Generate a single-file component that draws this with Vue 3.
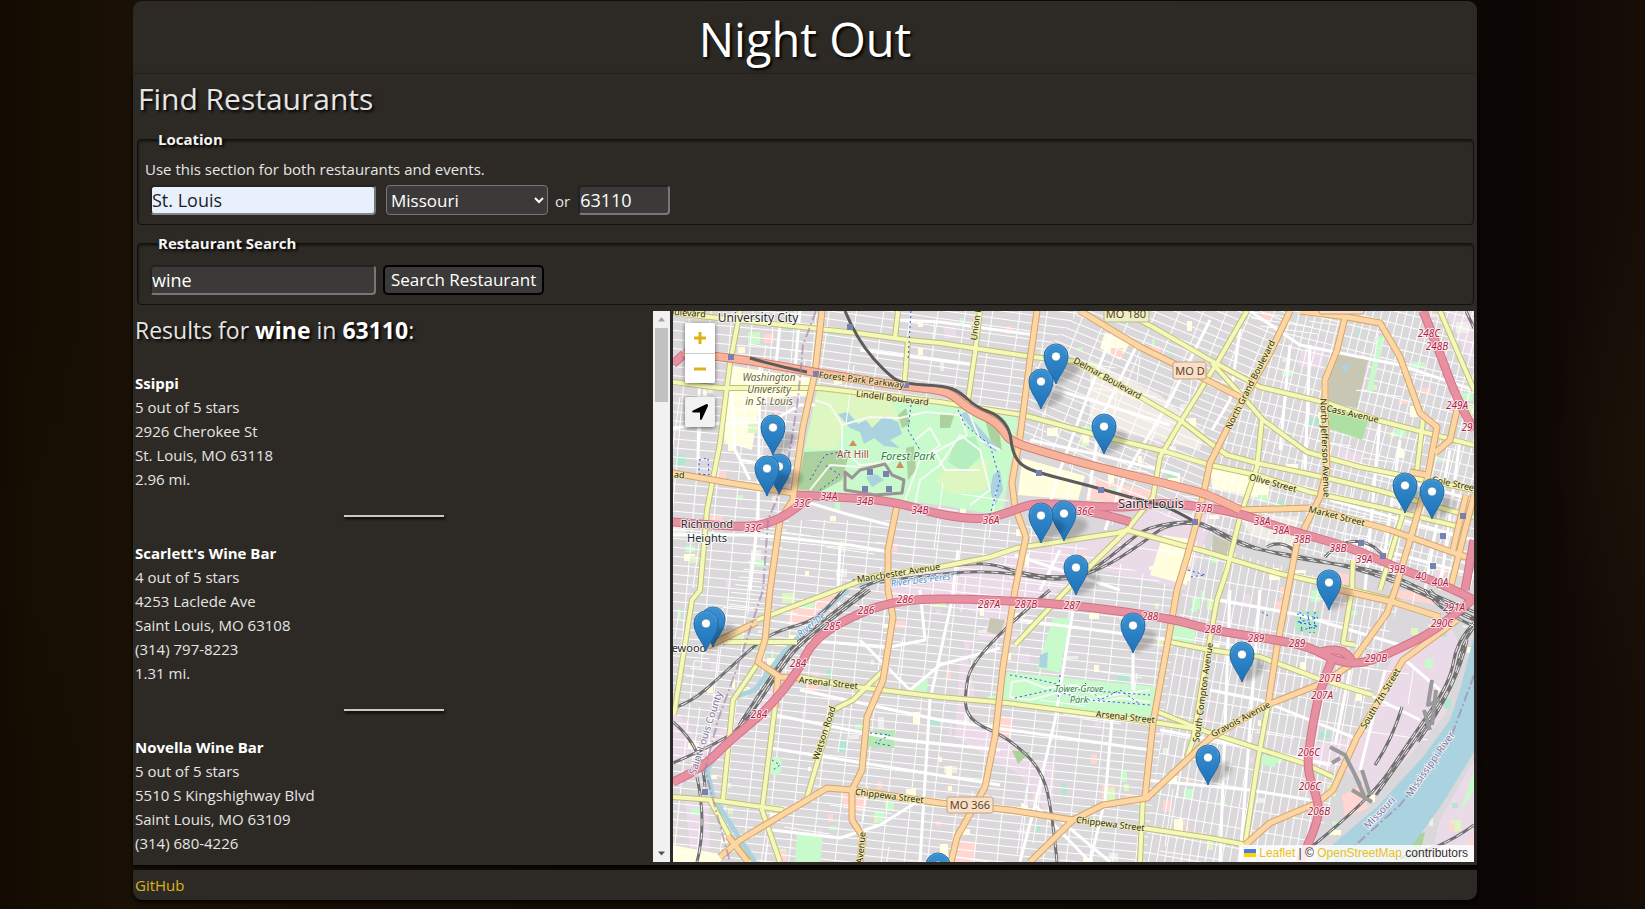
<script setup>
import { ref } from 'vue'

const city = ref('St. Louis')
const state = ref('Missouri')
const zip = ref('63110')
const term = ref('wine')

const results = [
  { name: 'Ssippi', lines: ['5 out of 5 stars', '2926 Cherokee St', 'St. Louis, MO 63118', '2.96 mi.'] },
  { name: "Scarlett's Wine Bar", lines: ['4 out of 5 stars', '4253 Laclede Ave', 'Saint Louis, MO 63108', '(314) 797-8223', '1.31 mi.'] },
  { name: 'Novella Wine Bar', lines: ['5 out of 5 stars', '5510 S Kingshighway Blvd', 'Saint Louis, MO 63109', '(314) 680-4226', '3.04 mi.'] },
]

const markers = [
  [1056, 384], [1041, 409], [773, 455], [1104, 454], [779, 494], [767, 496], [1405, 513], [1432, 519],
  [1064, 541], [1041, 543], [1076, 595], [1329, 610], [713, 647], [706, 651], [1133, 653], [1242, 682],
  [1208, 785], [938, 893],
]

// Rounds the corners of an "M x y L x y" polyline through its segment midpoints.
const smooth = (d) => {
  const n = d.match(/-?\d+/g).map(Number)
  const p = []
  for (let i = 0; i < n.length; i += 2) p.push([n[i], n[i + 1]])
  if (p.length < 3) return d
  let out = `M${p[0][0]} ${p[0][1]}`
  for (let i = 1; i < p.length - 1; i++) {
    const last = i === p.length - 2
    const ex = last ? p[i + 1][0] : (p[i][0] + p[i + 1][0]) / 2
    const ey = last ? p[i + 1][1] : (p[i][1] + p[i + 1][1]) / 2
    out += `Q${p[i][0]} ${p[i][1]} ${ex} ${ey}`
  }
  return out
}

// Seeded generator keeps the scattered city blocks stable between renders.
let seed = 41
const rand = () => {
  seed = (seed * 16807) % 2147483647
  return seed / 2147483647
}
const tones = ['#c8facc', '#c8facc', '#def6c0', '#ffffe0', '#ffffe0', '#ffd6d1', '#ebdbe8', '#eeeeea', '#b3e6cf']
const blocks = Array.from({ length: 330 }, () => ({
  x: Math.round(673 + rand() * 795),
  y: Math.round(311 + rand() * 548),
  w: Math.round(3 + rand() * 10),
  h: Math.round(3 + rand() * 9),
  fill: tones[Math.floor(rand() * tones.length)],
}))
const lanes = Array.from({ length: 90 }, () => {
  const x = Math.round(673 + rand() * 795)
  const y = Math.round(311 + rand() * 548)
  const long = Math.round(20 + rand() * 50)
  return rand() > 0.5
    ? `M${x} ${y}l${long} ${Math.round(long / 7)}`
    : `M${x} ${y}l${-Math.round(long / 7)} ${long}`
})

const districts = [
  { fill: '#ebdbe8', d: 'M870 575L940 566L1017 552L1120 535L1150 510L1215 515L1185 590L1100 570L1040 600L1000 640L963 640L975 690L965 725L1010 735L1025 760L1055 765L1052 820L1020 775L955 737L960 660L990 620L940 597L890 600Z' },
  { fill: '#ebdbe8', d: 'M673 705L700 745L760 700L790 650L800 640L770 700L720 750L673 765Z' },
  { fill: '#ebdbe8', d: 'M685 800L708 800L710 850L690 848Z' },
  { fill: '#ebdbe8', d: 'M1395 650L1450 625L1462 650L1445 715L1375 795L1345 770L1310 770L1315 745L1360 735Z' },
  { fill: '#ebdbe8', d: 'M1300 350L1325 348L1322 368L1298 366Z' },
  { fill: '#ebdbe8', d: 'M1340 448L1363 455L1360 470L1338 462Z' },
  { fill: '#ebdbe8', d: 'M1430 862L1440 820L1474 760L1474 862Z' },
  { fill: '#ebdbe8', d: 'M1445 311L1474 311L1474 370Z' },
  { fill: '#f0ebe4', d: 'M1090 360L1160 395L1205 432L1200 450L1090 425Z' },
  { fill: '#ffffe0', d: 'M728 365L770 372L812 378L808 395L760 400L752 450L724 442Z' },
  { fill: '#ffffe0', d: 'M1163 535L1195 540L1187 585L1150 575Z' },
  { fill: '#ffffe0', d: 'M1105 332L1130 343L1120 360L1100 348Z' },
  { fill: '#ffffe0', d: 'M1022 458L1085 476L1078 500L1018 495Z' },
  { fill: '#ffffe0', d: 'M1210 462L1270 476L1268 500L1212 488Z' },
  { fill: '#ffffe0', d: 'M673 845L725 855L720 862L673 862Z' },
  { fill: '#ffd6d1', d: 'M1093 478L1155 492L1150 508L1085 502Z' },
  { fill: '#ffd6d1', d: 'M790 610L832 592L850 592L820 620L788 624Z' },
  { fill: '#ffd6d1', d: 'M840 792L868 796L862 812L845 808Z' },
  { fill: '#ffd6d1', d: 'M960 840L977 842L972 862L955 862Z' },
  { fill: '#ffd6d1', d: 'M1342 795L1363 785L1368 808L1345 818Z' },
  { fill: '#ffd6d1', d: 'M1395 590L1430 592L1436 605L1398 598Z' },
  { fill: '#ffd6d1', d: 'M1328 570L1350 575L1346 600L1326 592Z' },
  { fill: '#ffd6d1', d: 'M1103 785L1115 785L1113 800L1101 798Z' },
  { fill: '#ffd6d1', d: 'M998 715L1013 718L1010 738L994 734Z' },
  { fill: '#eeeae4', d: 'M1240 518L1300 516L1290 550L1250 535Z' },
]

const grounds = [
  { fill: '#c7c7b4', d: 'M1336 352L1368 360L1357 408L1328 402L1329 378Z' },
  { fill: '#c7c7b4', d: 'M1213 535L1230 543L1226 557L1212 553Z' },
  { fill: '#c7c7b4', d: 'M990 618L1005 620L1000 635L987 632Z' },
  { fill: '#aedfa3', d: 'M1330 406L1368 421L1362 440L1328 428Z' },
  { fill: '#c8facc', d: 'M1053 618L1070 618L1060 673L1037 668Z' },
  { fill: '#c8facc', d: 'M1007 672L1157 687L1153 718L1000 702Z' },
  { fill: '#c8facc', d: 'M1174 622L1197 624L1193 643L1172 640Z' },
  { fill: '#c8facc', d: 'M797 833L823 838L820 862L795 862Z' },
  { fill: '#c8facc', d: 'M912 690L928 678L927 692Z' },
  { fill: '#c8facc', d: 'M771 757L782 758L780 775L770 774Z' },
  { fill: '#b6e8b4', d: 'M868 731L895 730L894 748L866 746Z' },
  { fill: '#b6e8c8', d: 'M1296 611L1320 611L1318 634L1295 631Z' },
  { fill: '#add19e', d: 'M1012 750L1030 752L1018 764Z' },
  { fill: '#add19e', d: 'M1403 840L1425 832L1418 862L1395 862Z' },
  { fill: '#c8facc', d: 'M1474 770L1474 790L1460 812Z' },
  { fill: '#c8facc', d: 'M1378 336L1384 337L1372 392L1367 390Z' },
  { fill: '#c8facc', d: 'M1262 755L1278 757L1275 767L1260 765Z' },
  { fill: '#c8facc', d: 'M817 391L940 405L968 410L1018 418L1008 480L1003 516L940 505L797 490L806 440Z' },
  { fill: '#def6c0', d: 'M817 391L890 398L900 420L870 430L845 425L835 450L806 448Z' },
  { fill: '#add19e', d: 'M804 452L850 450L842 480L820 492L797 489Z' },
  { fill: '#def6c0', d: 'M945 470L990 460L985 490L950 495L935 480Z' },
  { fill: '#b5efc0', d: 'M955 440L975 436L982 455L965 472L948 462Z' },
  { fill: '#add19e', d: 'M940 415L955 413L950 428L940 428Z' },
  { fill: '#add19e', d: 'M985 420L998 424L1002 450L992 445Z' },
  { fill: '#add19e', d: 'M906 448L914 446L916 470L908 480Z' },
  { fill: '#add19e', d: 'M898 415L906 408L910 424L902 428Z' },
  { fill: '#aad3df', d: 'M838 414L848 412L858 424L866 420L872 428L884 416L898 422L902 434L890 440L900 448L884 446L874 438L864 444L860 432L850 428Z' },
  { fill: '#aad3df', d: 'M960 414L966 412L990 440L998 446L996 452L984 444Z' },
  { fill: '#aad3df', d: 'M993 475L1000 470L1003 490L995 505L990 490Z' },
  { fill: '#aad3df', d: 'M866 477L876 474L884 480L872 487Z' },
  { fill: '#aad3df', d: 'M1040 655L1048 652L1047 668L1039 667Z' },
  { fill: '#aad3df', d: 'M1341 366L1351 363L1345 373Z' },
]

const river = 'M1474 636L1460 690L1450 720L1423 757L1377 807L1312 862L1400 862L1443 803L1474 752Z'

const minor = [
  'M673 428L720 423L770 422L800 405L815 405', 'M673 535L760 535L850 545L890 552', 'M730 363L735 450L750 480',
  'M760 363L758 520L750 590', 'M700 340L698 460', 'M740 460L795 468', 'M890 525L850 515L800 500', 'M840 545L838 590',
  'M800 310L795 370', 'M780 325L776 365', 'M900 320L940 322L1035 335', 'M860 350L975 365',
  'M1113 331L1090 390L1060 470L1045 520', 'M1137 345L1100 420L1088 500', 'M1210 320L1170 400L1125 475L1105 530',
  'M1040 385L1090 400L1170 425', 'M1030 440L1100 455L1180 475', 'M1015 555L1120 590', 'M1040 590L1060 550',
  'M958 550L952 600L930 700L920 862', 'M800 690L940 720L1150 750', 'M775 715L900 740L1000 750', 'M770 748L1000 785',
  'M772 830L840 838L880 825L920 800', 'M920 590L925 640L890 647L800 640', 'M860 640L910 690L940 665L1000 648',
  'M1073 610L1055 720L1035 805L1020 862', 'M1112 720L1105 800L1090 862', 'M1133 653L1133 690', 'M1020 620L1170 640',
  'M1035 805L1090 862', 'M1060 820L1110 862', 'M1160 730L1240 745L1330 765', 'M1210 690L1260 700L1360 740',
  'M1145 780L1250 790L1310 800', 'M1220 600L1300 615L1400 645', 'M1230 590L1220 862', 'M1260 590L1240 862',
  'M1350 670L1335 745', 'M1360 690L1420 720', 'M1385 670L1360 770', 'M1405 660L1440 690', 'M1250 311L1300 345L1400 365L1474 390',
  'M1240 330L1230 400L1212 430', 'M1290 345L1280 450', 'M1310 345L1305 470', 'M1380 420L1365 590', 'M1400 440L1380 590',
  'M1460 440L1440 590', 'M1450 450L1425 590', 'M1330 500L1474 540', 'M1345 540L1474 575', 'M1330 460L1474 500',
]

const secondary = [
  'M740 311L737 327L730 363L720 443L707 510L700 590L692 600L683 657L674 715',
  'M673 313L737 320L857 333L908 340L940 343L1033 357L1077 362L1137 395L1180 420L1210 443L1227 455L1257 463L1327 478L1377 490L1474 517',
  'M1120 310L1153 327L1210 360L1260 387L1327 403L1377 420L1474 445',
  'M1212 363L1243 397L1263 420L1307 452L1360 467L1410 477L1474 490',
  'M673 382L720 388L820 388L940 402L1023 415L1097 435L1167 452L1210 465L1257 475L1310 492L1383 508L1460 527',
  'M1262 420L1257 467L1240 517L1227 570L1217 600L1206 660L1193 740L1187 757', 'M1247 311L1217 363L1180 423L1160 457L1153 497L1127 530L1073 583L1015 645',
  'M1440 311L1474 390', 'M980 311L975 353L967 407', 'M908 340L904 388', 'M898 311L895 338',
  'M757 620L837 590L870 577L940 567L990 557L1017 548L1117 533L1127 530L1210 553L1277 573L1340 587L1400 602',
  'M775 707L762 810L780 862', 'M1143 797L1140 862', 'M1143 828L1210 838L1247 845', 'M1170 642L1210 650L1260 657L1317 678L1373 695',
  'M1153 710L1210 733L1303 763L1333 777', 'M1353 560L1352 590L1343 643L1355 645', 'M1423 420L1417 470L1398 530L1380 590',
  'M800 677L857 687L940 697L1007 703L1153 722L1203 730', 'M887 667L853 700L833 710L807 797', 'M758 663L733 700L730 730L723 800',
  'M673 797L713 800L783 810', 'M710 800L730 837L750 862', 'M723 642L797 642', 'M1268 705L1258 760L1245 845',
]

const primary = [
  'M822 311L815 373L803 427L795 483L793 500L780 520L770 590L765 640L758 662L780 677L800 678', 'M778 677L775 707',
  'M673 473L730 483L793 493', 'M898 500L888 550L888 590L893 617L883 680L867 717L862 770L852 790L852 820L863 837L860 862',
  'M720 857L740 840L827 788L852 790L940 803L1010 810L1073 820', 'M728 836L748 862',
  'M1030 862L1073 820L1103 805L1147 798L1210 738L1267 705L1323 683L1350 665L1387 613L1395 590L1413 530L1427 480L1432 453L1437 427L1420 413L1400 357L1380 323L1347 317L1300 311',
  'M1037 311L1030 360L1020 437L1012 483L1015 507L1026 537L1015 590L1003 667L995 737L985 787L957 837L951 862',
  'M1080 311L1140 347L1187 370L1240 397', 'M1290 311L1270 353L1230 423L1210 463L1200 510L1187 557L1177 590L1170 630L1153 723L1145 797',
  'M1345 317L1337 350L1325 380L1325 407L1327 470L1320 497L1297 543L1288 590L1277 647L1268 705', 'M1240 510L1310 508L1390 530L1474 560',
  'M1457 620L1430 640L1403 660L1357 737L1333 790L1317 803L1270 823L1245 845', 'M1340 590L1393 602L1440 617', 'M708 646L757 622',
  'M1474 495L1460 550L1450 590', 'M1466 495L1453 550', 'M1435 453L1450 440L1457 410', 'M1427 475L1410 472',
]

const trunk = ['M683 353L730 357L817 373L910 387L940 390L953 395L970 410L993 420L1003 430L1010 441L1040 451L1097 467L1180 487L1210 495L1240 510'].map(smooth)

const motorway = [
  'M673 364L684 354', 'M673 522L743 528L770 523L790 513L810 497', 'M797 495L860 498L900 503L940 515L983 520L1007 513L1033 503L1070 505L1127 508L1160 502L1210 508L1243 514L1277 527L1350 547L1397 568L1450 587L1474 600',
  'M1060 506L1110 515L1130 522', 'M673 782L700 770L730 740L767 710L797 673L813 640L850 617L890 602L940 598L1057 603L1170 618L1210 630L1277 640L1310 647L1333 660L1360 665L1397 650L1440 628L1474 598',
  'M1332 660L1320 687L1310 740L1307 770L1317 797L1320 820L1300 862', 'M1423 311L1440 353L1457 400L1474 430', 'M1474 540L1465 590',
  'M1320 652L1345 645L1352 662',
].map(smooth)

const rails = [
  'M860 588L890 575L940 567L987 562L1020 573L1057 578L1090 573L1127 543L1147 527L1193 520L1210 527L1250 547L1303 560L1360 567L1397 577L1423 590L1474 612',
  'M880 582L940 573L1000 571L1060 582L1100 570L1140 545L1165 525L1200 522L1240 547L1300 556L1370 572L1430 597L1474 618',
  'M855 580L843 590L817 620L780 630L757 643L720 677L690 703L673 708', 'M870 590L803 640L780 670L743 727L710 747L673 763',
  'M866 588L799 638L776 668L739 725', 'M673 722L703 747L705 787', 'M697 777L707 823L697 862',
  'M1050 590L973 653L963 703L973 723L1007 737L1043 770L1053 820L1057 862',
  'M1474 623L1457 640L1450 683L1410 740L1370 800L1310 848', 'M1474 627L1461 644L1454 684L1414 742L1376 795', 'M1467 640L1458 685L1418 742',
  'M1425 590L1440 612L1474 626', 'M1430 590L1445 608L1474 620', 'M1466 311L1474 328', 'M1402 707L1392 740L1375 765',
  'M1267 547L1275 542L1295 548L1298 560', 'M1325 557L1340 540L1375 543L1384 558', 'M1474 825L1440 850L1400 858',
].map(smooth)
const metro = [
  'M845 311L857 340L890 377L906 384L945 386L960 392L976 407L998 415L1010 430L1012 450L1020 465L1039 473L1087 485L1140 500L1170 507L1195 522',
  'M750 358L780 367L807 372',
].map(smooth)
const trails = [
  'M911 311L908 360', 'M958 410L965 425L990 445L1000 480L990 515', 'M810 480L825 455L850 450', 'M1010 675L1040 680L1080 690L1150 695',
  'M1015 698L1050 690L1090 700L1150 705', 'M1060 675L1058 700', 'M1085 683L1100 700L1120 690L1140 704', 'M699 460L708 458L709 475L699 474Z', 'M911 405L908 430L920 450', 'M820 490L840 475L825 465',
  'M870 733L890 735L875 743L892 746', 'M772 760L780 765L773 770', 'M1297 614L1318 618L1297 622L1318 626L1298 631', 'M1300 612L1302 632M1308 612L1310 633M1315 612L1314 633', 'M1188 570L1205 575L1190 577', 'M1262 612L1270 617',
]
const stations = [[850, 327], [731, 357], [816, 374], [906, 385], [870, 472], [886, 474], [865, 489], [889, 489], [1039, 473], [1101, 490], [1195, 522], [1463, 516], [1443, 536], [1361, 543], [1383, 556], [1433, 566], [705, 792]]

const places = [
  { t: 'University City', x: 758, y: 322, s: 12 }, { t: 'Richmond', x: 707, y: 528, s: 11 }, { t: 'Heights', x: 707, y: 542, s: 11 },
  { t: 'Saint Louis', x: 1151, y: 508, s: 13 }, { t: 'ewood', x: 689, y: 652, s: 11 },
]
const streets = [
  { t: 'Forest Park Parkway', x: 861, y: 383, r: 7 }, { t: 'Lindell Boulevard', x: 892, y: 401, r: 7 }, { t: 'Delmar Boulevard', x: 1106, y: 381, r: 29 },
  { t: 'North Grand Boulevard', x: 1253, y: 386, r: -63 }, { t: 'North Jefferson Avenue', x: 1322, y: 448, r: 88 }, { t: 'Cass Avenue', x: 1352, y: 417, r: 13 },
  { t: 'Olive Street', x: 1272, y: 486, r: 15 }, { t: 'Market Street', x: 1336, y: 519, r: 14 }, { t: 'Cole Street', x: 1454, y: 487, r: 12 },
  { t: 'Manchester Avenue', x: 899, y: 576, r: -9 }, { t: 'Arsenal Street', x: 828, y: 686, r: 6 }, { t: 'Arsenal Street', x: 1125, y: 720, r: 6 },
  { t: 'Watson Road', x: 827, y: 734, r: -72 }, { t: 'Chippewa Street', x: 889, y: 799, r: 7 }, { t: 'Chippewa Street', x: 1110, y: 827, r: 7 },
  { t: 'South Compton Avenue', x: 1206, y: 693, r: -82 }, { t: 'Gravois Avenue', x: 1242, y: 722, r: -28 }, { t: 'South 7th Street', x: 1383, y: 700, r: -59 },
  { t: 'Avenue', x: 864, y: 848, r: -85 }, { t: 'Union B', x: 979, y: 324, r: -82 }, { t: 'oulevard', x: 687, y: 316, r: 4 }, { t: 'ad', x: 679, y: 478, r: 5 },
]
const exits = [
  ['34A', 829, 500], ['34B', 865, 505], ['34B', 920, 514], ['33C', 802, 507], ['33C', 753, 532], ['36A', 991, 524], ['36C', 1085, 515], ['37B', 1204, 512],
  ['38A', 1262, 525], ['38A', 1281, 534], ['38B', 1302, 543], ['38B', 1338, 552], ['39A', 1364, 563], ['39B', 1397, 573], ['40', 1421, 580], ['40A', 1440, 586],
  ['286', 905, 603], ['286', 866, 614], ['285', 832, 630], ['284', 798, 667], ['284', 759, 718], ['287A', 989, 608], ['287B', 1026, 608], ['287', 1072, 609],
  ['288', 1150, 620], ['288', 1213, 633], ['289', 1256, 642], ['289', 1297, 647], ['290B', 1376, 662], ['290C', 1442, 627], ['291A', 1454, 611],
  ['207B', 1330, 682], ['207A', 1322, 699], ['206C', 1309, 756], ['206C', 1310, 790], ['206B', 1319, 815], ['248C', 1429, 337], ['248B', 1437, 350], ['249A', 1457, 409], ['29', 1467, 431],
]
</script>

<template>
  <div class="page">
    <header class="banner"><h1>Night Out</h1></header>

    <main class="content">
      <h2>Find Restaurants</h2>
      <form class="search" @submit.prevent>
        <fieldset>
          <legend>Location</legend>
          <p>Use this section for both restaurants and events.</p>
          <div class="fields">
            <input v-model="city" class="wide filled" type="text" aria-label="City" />
            <select v-model="state" aria-label="State">
              <option>Missouri</option>
              <option>Illinois</option>
            </select>
            <label for="zip">or</label>
            <input id="zip" v-model="zip" class="zip" type="text" />
          </div>
        </fieldset>
        <fieldset>
          <legend>Restaurant Search</legend>
          <div class="fields second">
            <input v-model="term" class="wide" type="text" aria-label="Restaurant keyword" />
            <button class="go" type="submit">Search Restaurant</button>
          </div>
        </fieldset>
      </form>

      <div class="split">
        <section class="results">
          <div class="list">
            <h3>Results for <strong>wine</strong> in <strong>63110</strong>:</h3>
            <template v-for="(r, i) in results" :key="r.name">
              <hr v-if="i" />
              <article>
                <h4>{{ r.name }}</h4>
                <p v-for="line in r.lines" :key="line">{{ line }}</p>
              </article>
            </template>
          </div>
          <div class="scrollbar" aria-hidden="true">
            <svg viewBox="0 0 17 17"><path d="M8.500 6L12 10.500H5Z" fill="#a3a3a3" /></svg>
            <div class="thumb"></div>
            <svg viewBox="0 0 17 17"><path d="M5 6.500H12L8.500 10.500Z" fill="#505050" /></svg>
          </div>
        </section>

        <section class="map" aria-label="Map">
          <svg class="tiles" viewBox="673 311 801 551" preserveAspectRatio="xMidYMid slice">
            <defs>
              <pattern id="gridWest" width="21" height="9" patternUnits="userSpaceOnUse" patternTransform="rotate(5)"><path d="M0 0H21M0 0V9" /></pattern>
              <pattern id="gridNorth" width="27" height="8" patternUnits="userSpaceOnUse" patternTransform="rotate(8)"><path d="M0 0H27M0 0V8" /></pattern>
              <pattern id="gridMid" width="22" height="8" patternUnits="userSpaceOnUse" patternTransform="rotate(22)"><path d="M0 0H22M0 0V8" /></pattern>
              <pattern id="gridEast" width="8" height="12" patternUnits="userSpaceOnUse" patternTransform="rotate(14)"><path d="M0 0H8M0 0V12" /></pattern>
              <pattern id="gridSouth" width="23" height="8" patternUnits="userSpaceOnUse" patternTransform="rotate(6)"><path d="M0 0H23M0 0V8" /></pattern>
              <pattern id="gridSoutheast" width="8" height="20" patternUnits="userSpaceOnUse" patternTransform="rotate(10)"><path d="M0 0H8M0 0V20" /></pattern>
              <linearGradient id="pin" x1="0" y1="0" x2="0" y2="1"><stop offset="0" stop-color="#3b91d0" /><stop offset="1" stop-color="#1d72b8" /></linearGradient>
              <filter id="soft" x="-50%" y="-50%" width="200%" height="200%"><feGaussianBlur stdDeviation="2" /></filter>
              <g id="marker">
                <path d="M-3 -3L8 -22Q20 -26 24 -16Q20 -6 2 0Z" fill="#000" opacity=".2" filter="url(#soft)" />
                <path d="M0 0C-3 -9 -12 -17 -12 -28A12 12 0 0 1 12 -28C12 -17 3 -9 0 0Z" fill="url(#pin)" stroke="#2469a5" />
                <path d="M-10.500 -29A10.500 10.500 0 0 1 10.500 -29" fill="none" stroke="#75b4e0" stroke-opacity=".5" />
                <circle cy="-27.500" r="4.500" fill="#fff" stroke="#2468a3" stroke-width=".7" />
              </g>
            </defs>

            <rect x="673" y="311" width="801" height="551" fill="#dad8da" />
            <path v-for="a in districts" :key="a.d" :d="a.d" :fill="a.fill" />
            <rect v-for="(b, i) in blocks" :key="i" :x="b.x" :y="b.y" :width="b.w" :height="b.h" :fill="b.fill" />
            <path d="M673 311H822L795 500L770 590L673 700Z" fill="url(#gridWest)" />
            <path d="M822 311H1080L1037 360L1015 420L817 390Z" fill="url(#gridNorth)" />
            <path d="M1080 311H1290L1210 463L1195 530L1015 440L1037 360Z" fill="url(#gridMid)" />
            <path d="M1290 311H1474V590L1195 530L1210 463Z" fill="url(#gridEast)" />
            <path d="M673 700L770 520L890 520L1020 520L1180 590L1145 862H673Z" fill="url(#gridSouth)" />
            <path d="M1190 540L1400 600L1340 780L1310 862H1143Z" fill="url(#gridSoutheast)" />
            <path v-for="a in grounds" :key="a.d" :d="a.d" :fill="a.fill" />
            <path :d="river" fill="#aad3df" />
            <path class="creek" d="M848 590L817 617L780 657L755 690L735 697M722 745L707 770L713 797L755 862" />
            <path class="creek" d="M860 583L900 580L960 573" />
            <path v-for="d in lanes" :key="d" class="lane" :d="d" />
            <path class="park-path" d="M815 400L830 405L842 425L870 417L900 418L925 412L960 415L967 435L935 452L945 470L980 470M842 425L842 450L860 465L890 462M915 440L930 428L940 445L920 460L905 500M968 410L980 440L1000 450M810 490L830 465L860 467M960 435L940 465L920 480L915 505M960 435L980 450L990 490L970 505" />
            <path class="zoo" d="M845 472L852 478L860 470L885 464L892 475L904 480L902 493L875 495L845 490Z" />
            <path class="park-path" d="M1012 682L1025 680L1045 688L1075 685L1100 697L1150 690M1012 682L1010 697L1030 700L1060 692L1100 702L1120 698L1150 702" />
            <path v-for="d in minor" :key="d" class="minor" :d="d" />
            <path v-for="d in rails" :key="d" class="rail" :d="d" />
            <path v-for="d in rails" :key="d + 'g'" class="rail-gap" :d="d" />
            <path v-for="d in secondary" :key="d + 'c'" class="secondary case" :d="d" />
            <path v-for="d in secondary" :key="d" class="secondary" :d="d" />
            <path v-for="d in primary" :key="d + 'c'" class="primary case" :d="d" />
            <path v-for="d in primary" :key="d" class="primary" :d="d" />
            <path v-for="d in motorway" :key="d + 'c'" class="motorway case" :d="d" />
            <path v-for="d in motorway" :key="d" class="motorway" :d="d" />
            <path v-for="d in trunk" :key="d + 'c'" class="trunk case" :d="d" />
            <path v-for="d in trunk" :key="d" class="trunk" :d="d" />
            <path v-for="d in metro" :key="d" class="metro" :d="d" />
            <path v-for="d in trails" :key="d" class="trail" :d="d" />
            <path class="boundary" d="M816 311L803 345L798 400L785 480L768 520L763 590L740 660L718 720L705 770L730 862" />
            <path class="boundary" d="M1474 675L1450 740L1400 805L1350 850L1335 862" />
            <path class="yard" d="M1330 747L1345 755L1360 785M1340 758L1332 763M1355 775L1366 800M1362 770L1370 795M1352 790L1372 802" />
            <path class="yard" d="M1432 680L1428 705L1440 700M1424 710L1430 730M1436 690L1432 725" />
            <rect v-for="s in stations" :key="s.join()" :x="s[0] - 3" :y="s[1] - 3" width="6" height="6" fill="#7981b0" />
            <path d="M849 446L853 440L857 446ZM896 468L900 461L904 468Z" fill="#d08f55" />

            <g class="shield">
              <rect x="1173" y="362" width="33" height="17" rx="2" /><text x="1190" y="375">MO D</text>
              <rect x="947" y="797" width="46" height="16" rx="2" /><text x="970" y="809">MO 366</text>
              <rect class="lime" x="1104" y="306" width="45" height="16" rx="2" /><text x="1126" y="318">MO 180</text>
              <rect x="1319" y="299" width="45" height="15" rx="2" />
            </g>
            <g class="street"><text v-for="(s, i) in streets" :key="i" :transform="`translate(${s.x} ${s.y}) rotate(${s.r})`">{{ s.t }}</text></g>
            <g class="exit"><text v-for="(e, i) in exits" :key="i" :x="e[1]" :y="e[2]">{{ e[0] }}</text></g>
            <g class="place"><text v-for="p in places" :key="p.t" :x="p.x" :y="p.y" :font-size="p.s">{{ p.t }}</text></g>
            <g class="school"><text x="769" y="381">Washington</text><text x="769" y="393">University</text><text x="769" y="405">in St. Louis</text></g>
            <g class="park"><text class="large" x="908" y="460">Forest Park</text><text x="1079" y="692">Tower Grove</text><text x="1079" y="703">Park</text></g>
            <text class="hill" x="853" y="458">Art Hill</text>
            <g class="water"><text transform="translate(921 583) rotate(-7)">River Des Peres</text><text transform="translate(813 627) rotate(-39)">River De</text></g>
            <g class="border-name">
              <text transform="translate(1433 766) rotate(-55)">Mississippi River</text>
              <text transform="translate(1382 815) rotate(-46)">Missouri</text>
              <text transform="translate(709 734) rotate(-72)">Saint Louis County</text>
            </g>
            <use v-for="m in markers" :key="m.join()" href="#marker" :x="m[0]" :y="m[1]" />
          </svg>

          <div class="controls">
            <div class="zoom">
              <button type="button" aria-label="Zoom in"><svg viewBox="0 0 30 30"><path d="M15 9V21M9 15H21" /></svg></button>
              <button type="button" aria-label="Zoom out"><svg viewBox="0 0 30 30"><path d="M9 15H21" /></svg></button>
            </div>
            <button class="locate" type="button" aria-label="Show my location"><svg viewBox="0 0 30 30"><path d="M21.500 7Q23.500 7 23 9L17 22Q15.500 24 15 22V15.500H8.500Q6 15 8 13.500Z" /></svg></button>
          </div>
          <div class="credit">
            <svg viewBox="0 0 12 8"><path fill="#4c7be1" d="M0 0h12v4H0z" /><path fill="#ffd500" d="M0 4h12v4H0z" /></svg>
            <a href="#leaflet">Leaflet</a> | © <a href="#osm">OpenStreetMap</a> contributors
          </div>
        </section>
      </div>
    </main>

    <footer class="foot"><a href="#github">GitHub</a></footer>
  </div>
</template>

<style>
body {
  background:
    radial-gradient(ellipse 60px 300px at 3% 60%, #171003, transparent),
    radial-gradient(ellipse 90px 260px at 100% 50%, #1b1208, transparent),
    linear-gradient(90deg, #130a02 0, #1a1104 7%, #100a03 50%, #0c0604 92%, #160e07 100%);
}
</style>

<style scoped>
* { box-sizing: border-box; }
.page {
  height: 100vh;
  min-height: 600px;
  padding: 1px 168px 9px 133px;
  display: flex;
  flex-direction: column;
  color: #e6e5e3;
  font: 15px/24px "Open Sans", "Noto Sans", sans-serif;
}
h1, h2, h3, h4, p { margin: 0; font-weight: 400; }
.banner, .content, .foot { background: #2d2a26; box-shadow: 0 2px 4px #000; }
.banner { border-radius: 9px 9px 0 0; height: 73px; flex: none; box-shadow: none; border-bottom: 1px solid #292723; }
h1 { color: #fff; text-align: center; font-size: 47px; line-height: 77px; text-shadow: 2px 2px 3px #000; }
.content { flex: 1; min-height: 0; display: flex; flex-direction: column; padding: 0 3px 3px 0; }
h2 { font-size: 30px; line-height: 49px; margin: 0 5px 4px; text-shadow: 2px 2px 3px #000; }
.search { flex: none; display: flex; flex-direction: column; gap: 6px; padding: 0 0 6px 4px; }
fieldset {
  min-width: 0;
  margin: 0;
  padding: 6px 8px 9px 7px;
  border: 1px solid #12110f;
  border-radius: 4px;
  box-shadow: inset 1px 2px 2px #1a1816;
}
legend { padding: 0; margin-left: 13px; font-weight: 700; color: #f4f4f2; text-shadow: 2px 2px 3px #000; }
.fields { display: flex; align-items: center; margin: 4px 0 0 5px; height: 30px; }
.fields.second { margin-top: 4px; }
input, select, .go {
  font: 18px/24px "Open Sans", "Noto Sans", sans-serif;
  color: #fff;
  background: #3b3a38;
  height: 30px;
  border-radius: 4px;
}
input { border: 2px solid; border-color: #242321 #777 #777 #242321; padding: 0; }
.wide { width: 226px; }
.filled { background: #e8f0fe; color: #1c1c24; border-bottom-color: #858585; }
select, .go { font-size: 17px; }
select { width: 162px; margin-left: 10px; padding: 0; border: 1px solid #777; }
label { margin: 2px 8px 0 7px; }
.zip { width: 92px; }
.go { margin-left: 7px; padding: 0 6px; border: 2px solid #000; border-radius: 5px; }
.split { flex: 1; min-height: 0; display: grid; grid-template-columns: minmax(0, 537fr) minmax(0, 801fr); gap: 3px; }
.results { min-height: 0; display: flex; }
.list { flex: 1; min-width: 0; overflow: hidden; padding-left: 2px; }
h3 { font-size: 23px; line-height: 38px; margin-bottom: 22px; text-shadow: 2px 2px 3px #000; }
h3 strong { color: #fff; }
h4 { font-weight: 700; font-size: 15px; color: #fff; }
hr { width: 100px; height: 2px; margin: 24px auto; border: 0; background: #cac8c4; box-shadow: 1px 2px 3px #000; }
.scrollbar { width: 17px; flex: none; background: #f1f1f1; display: flex; flex-direction: column; align-items: center; }
.scrollbar svg { width: 17px; height: 17px; flex: none; }
.thumb { width: 13px; height: 74px; background: #c1c1c1; margin-bottom: auto; }
.map { position: relative; min-height: 0; overflow: hidden; background: #ddd; }
.tiles { position: absolute; width: 100%; height: 100%; display: block; font-family: "Noto Sans", "Open Sans", sans-serif; }
.tiles path { stroke-linejoin: round; }
.tiles text { text-anchor: middle; paint-order: stroke; stroke: #fff; stroke-opacity: .75; stroke-width: 2px; stroke-linejoin: round; }
pattern path { fill: none; stroke: #fff; stroke-width: 2px; }
.lane, .minor, .park-path, .zoo, .creek, .rail, .rail-gap, .secondary, .primary, .trunk, .motorway, .metro, .trail, .boundary, .yard { fill: none; }
.lane { stroke: #fff; stroke-width: 1px; }
.minor { stroke: #fff; stroke-width: 3px; }
.park-path { stroke: #f7faf3; stroke-width: 2px; }
.zoo { stroke: #9d9296; stroke-width: 3px; }
.creek { stroke: #aad3df; stroke-width: 5px; }
.rail { stroke: #707070; stroke-width: 3px; }
.rail-gap { stroke: #f4f4f4; stroke-width: 1px; stroke-dasharray: 7 7; }
.yard { stroke: #9a9a9a; stroke-width: 4px; }
.secondary { stroke: #f5f9b8; stroke-width: 4px; }
.secondary.case { stroke: #c0bf79; stroke-width: 6px; }
.primary { stroke: #fcd6a4; stroke-width: 5px; }
.primary.case { stroke: #d6a565; stroke-width: 7px; }
.trunk { stroke: #f9b29c; stroke-width: 7px; }
.trunk.case { stroke: #d2826a; stroke-width: 9px; }
.motorway { stroke: #e690a0; stroke-width: 7px; }
.motorway.case { stroke: #d6708a; stroke-width: 9px; }
.metro { stroke: #5c5a5a; stroke-width: 3px; }
.trail { stroke: #3050e8; stroke-width: 1px; stroke-dasharray: 2 3; }
.boundary { stroke: #a07da8; stroke-opacity: .6; stroke-width: 2px; stroke-dasharray: 10 3 2 3; }
.shield rect { fill: #f8dfc6; stroke: #c7a27e; }
.shield rect.lime { fill: #edf0c4; stroke: #b8bc88; }
.shield text { fill: #5d4426; stroke: none; font-size: 11px; }
.street { font-size: 9px; fill: #2b2b20; }
.street text { stroke: #f5f0b0; }
.exit { font-size: 10px; font-style: italic; fill: #b3203f; }
.place { fill: #2b2b2b; }
.school { font-size: 10px; font-style: italic; fill: #6b6428; }
.park { font-size: 9px; font-style: italic; fill: #2b8040; }
.park .large { font-size: 11px; }
.hill { font-size: 10px; fill: #8f4d34; }
.water { font-size: 9px; font-style: italic; fill: #5a92c8; }
.border-name { font-size: 10px; fill: #84739c; }
.controls { position: absolute; left: 12px; top: 12px; display: flex; flex-direction: column; gap: 14px; }
.zoom, .locate { width: 30px; border-radius: 2px; box-shadow: 0 1px 4px #0009; overflow: hidden; background: #fff; }
.controls button { display: block; width: 30px; height: 30px; border: 0; padding: 0; background: #fff; }
.zoom button + button { border-top: 1px solid #ccc; }
.controls .locate { background: #f2f2f2; }
.zoom path { stroke: #dcb21b; stroke-width: 3px; }
.controls svg { display: block; width: 30px; height: 30px; }
.credit { position: absolute; right: 0; bottom: 0; padding: 0 6px 0 5px; background: #ffffffd0; color: #333; font: 12px/17px "Liberation Sans", Arial, sans-serif; white-space: nowrap; }
.credit svg { width: 12px; height: 8px; margin-right: 3px; }
a { color: #dcb21b; text-decoration: none; }
.credit a { color: #ecc01c; }
.foot { flex: none; height: 30px; margin-top: 5px; padding: 3px 2px; border-radius: 0 0 9px 9px; }
</style>
